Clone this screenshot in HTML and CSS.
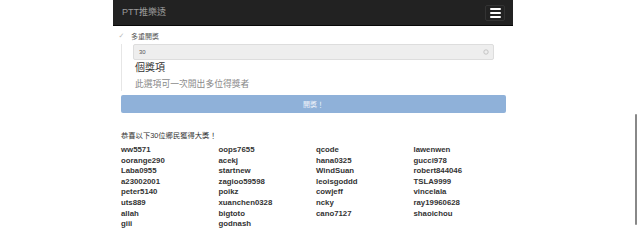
FILE: index.html
```html
<!DOCTYPE html>
<html lang="zh-Hant">
<head>
    <meta charset="UTF-8">
    <meta name="viewport" content="width=device-width, initial-scale=1.0">
    <title>PTT推樂透</title>
    <link rel="stylesheet" href="styles.css">
</head>
<body>
    <div class="pagina">
        <nav class="navbar">
            <span class="brand">PTT推樂透</span>
            <button type="button" class="toggle">
                <span class="bar"></span>
                <span class="bar"></span>
                <span class="bar"></span>
            </button>
        </nav>

        <div class="contenido">
            <label class="check">
                <span class="tick">✓</span>
                <span>多重開獎</span>
            </label>

            <div class="multi">
                <div class="select">
                    <span>30</span>
                    <svg class="caret" width="6" height="6" viewBox="0 0 6 6">
                        <circle cx="3" cy="3" r="2.2" fill="none" stroke="#bbb" stroke-width="0.8"/>
                    </svg>
                </div>
                <div class="titulo">個獎項</div>
                <div class="ayuda">此選項可一次開出多位得獎者</div>
            </div>

            <button type="button" class="abrir">開獎！</button>

            <p class="felicidades">恭喜以下30位鄉民獲得大獎！</p>
            <div class="ganadores" id="ganadores"></div>
        </div>
    </div>

    <div class="scroll"></div>

    <script>
        const ganadores = [
            'ww5571', 'oops7655', 'qcode', 'lawenwen',
            'oorange290', 'acekj', 'hana0325', 'gucci978',
            'Laba0955', 'startnew', 'WindSuan', 'robert844046',
            'a23002001', 'zagioo59598', 'leoisgoddd', 'TSLA9999',
            'peter5140', 'poikz', 'cowjeff', 'vincelala',
            'uts889', 'xuanchen0328', 'ncky', 'ray19960628',
            'allah', 'bigtoto', 'cano7127', 'shaoichou',
            'giii', 'godnash'
        ];
        const lista = document.getElementById('ganadores');
        ganadores.forEach(nombre => {
            lista.insertAdjacentHTML('beforeend', `<div class="ganador">${nombre}</div>`);
        });
    </script>
</body>
</html>
```

FILE: styles.css
```css
body {
    margin: 0;
    font-family: "Liberation Sans", Arial, "Noto Sans CJK TC", sans-serif;
    color: #333;
    background-color: #fff;
    overflow: hidden;
}
.pagina {
    width: 400px;
    margin-left: 113px;
}
.navbar {
    height: 26px;
    background-color: #222;
    border-bottom: 1px solid #080808;
    box-sizing: border-box;
    display: flex;
    align-items: center;
    justify-content: space-between;
    padding: 0 8px 0 9px;
}
.brand {
    color: #9d9d9d;
    font-size: 9px;
    line-height: 1;
}
.toggle {
    width: 20px;
    height: 16px;
    padding: 0;
    background: #222;
    border: 1px solid #333;
    border-radius: 2px;
    display: flex;
    flex-direction: column;
    align-items: center;
    justify-content: center;
    gap: 2px;
}
.bar {
    display: block;
    width: 11px;
    height: 2px;
    background-color: #fff;
    border-radius: 1px;
}
.contenido {
    padding: 0 8px;
}
.check {
    display: flex;
    align-items: center;
    gap: 5px;
    height: 13px;
    margin-left: -4px;
    padding-top: 3px;
    font-size: 7px;
    color: #555;
}
.tick {
    color: #bbb;
    font-size: 7px;
    font-family: "DejaVu Sans", sans-serif;
    width: 9px;
    text-align: center;
}
.multi {
    border-left: 1px solid #e6e6e6;
    margin-top: 2px;
    padding: 0 0 1px 11px;
}
.select {
    height: 16px;
    width: 361px;
    box-sizing: border-box;
    background-color: #eee;
    border: 1px solid #ddd;
    border-radius: 2px;
    display: flex;
    align-items: center;
    justify-content: space-between;
    padding: 0 4px 0 5px;
    font-size: 6px;
    color: #555;
}
.titulo {
    font-size: 10px;
    line-height: 12px;
    margin: 2px 0 0 2px;
    color: #333;
}
.ayuda {
    font-size: 8.8px;
    line-height: 12px;
    margin: 4px 0 0 2px;
    color: #8a8a8a;
}
.abrir {
    display: block;
    width: 385px;
    height: 18px;
    margin-top: 4px;
    border: none;
    border-radius: 2px;
    background-color: #8fb1d9;
    color: #eef3fa;
    font-size: 7px;
    font-family: inherit;
    padding: 0;
}
.felicidades {
    font-size: 7.3px;
    line-height: 10px;
    margin: 18px 0 4px;
    color: #333;
}
.ganadores {
    display: grid;
    grid-template-columns: repeat(4, 97.5px);
}
.ganador {
    font-size: 7.8px;
    font-weight: bold;
    line-height: 10.6px;
    color: #333;
}
.scroll {
    position: fixed;
    top: 114px;
    left: 635px;
    width: 2px;
    height: 111px;
    background-color: #888;
    border-radius: 1px;
}
```
